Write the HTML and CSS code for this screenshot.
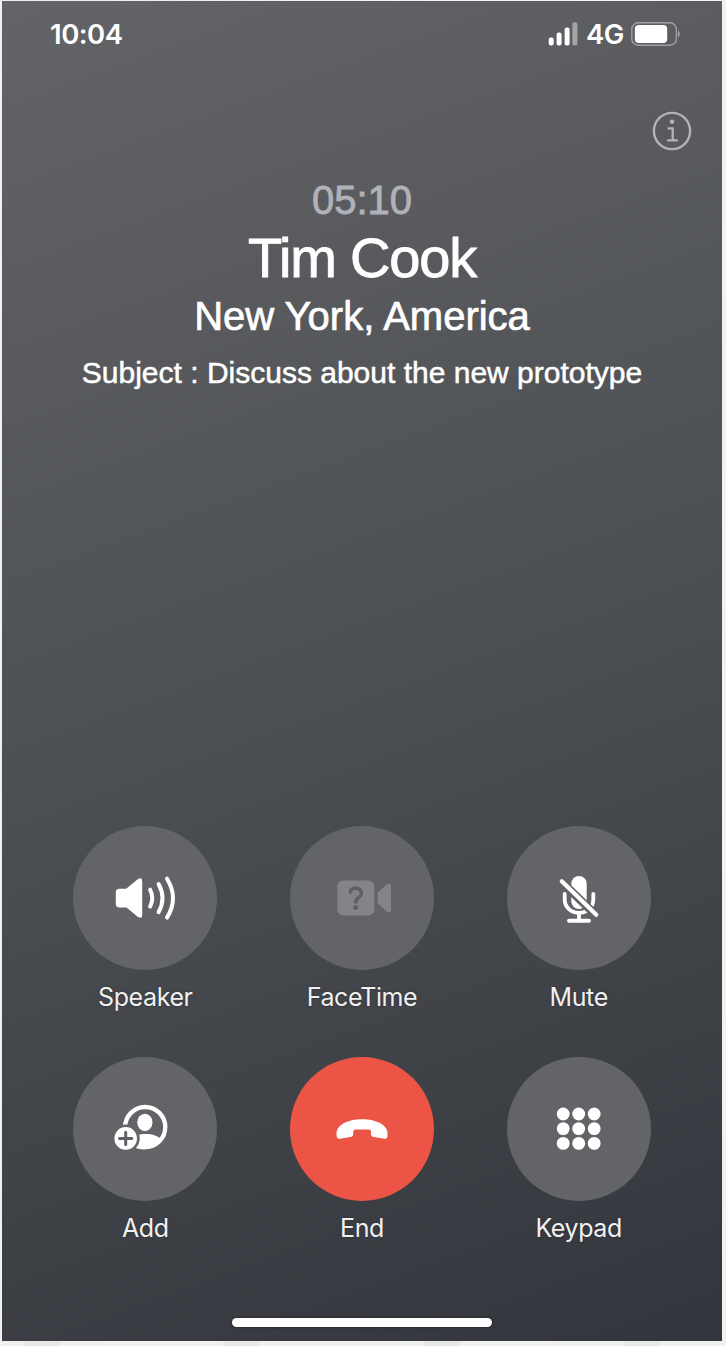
FILE: index.html
```html
<!DOCTYPE html>
<html lang="en">
<head>
<meta charset="utf-8">
<title>Call</title>
<link rel="stylesheet" href="styles.css">
</head>
<body>
<main class="phone">
  <header class="status">
    <span class="clock">10:04</span>
    <div class="indicators">
      <svg class="signal" width="30" height="24" viewBox="0 0 30 24" fill="#fff">
        <rect x="0.7" y="15.5" width="5" height="8" rx="2"/>
        <rect x="8.6" y="10.5" width="5" height="13" rx="2"/>
        <rect x="16.6" y="5.5" width="5" height="18" rx="2"/>
        <rect x="24.4" y="0.3" width="5" height="23.2" rx="2" fill="#a3a4a6"/>
      </svg>
      <span class="network">4G</span>
      <svg class="battery" width="49" height="24" viewBox="0 0 49 24">
        <rect x="0.8" y="0.8" width="44.6" height="22.4" rx="6.5" fill="none" stroke="#a0a1a4" stroke-width="1.4"/>
        <rect x="3.8" y="3" width="32.4" height="18" rx="4" fill="#fff"/>
        <path d="M47 8.5c2.3 1.4 2.3 5.6 0 7z" fill="#a0a1a4"/>
      </svg>
    </div>
  </header>
  <div class="toolbar">
    <svg width="40" height="40" viewBox="0 0 40 40" fill="none" stroke="#b2b2b9">
      <circle cx="20" cy="20" r="18.1" stroke-width="2.4"/>
      <circle cx="20" cy="10.8" r="2.3" fill="#b2b2b9" stroke="none"/>
      <path d="M16.5 17.3H20.7V29.3M16 29.4H25" stroke-width="2.3" stroke-linecap="round"/>
    </svg>
  </div>
  <section class="caller">
    <div class="timer">05:10</div>
    <h1 class="name">Tim Cook</h1>
    <div class="place">New York, America</div>
    <div class="subject">Subject : Discuss about the new prototype</div>
  </section>
  <section class="controls">
    <div class="control">
      <div class="button">
        <svg width="144" height="144" viewBox="0 0 144 144" fill="#fff">
          <path d="M46.5 62.8H53.2L64.7 53.3Q69.2 50.8 69.2 55V89.2Q69.2 93.2 65 91L53.5 81.5H46.5Q42.8 81.5 42.8 77.8V66.5Q42.8 62.8 46.5 62.8Z"/>
          <g fill="none" stroke="#fff" stroke-width="4" stroke-linecap="round">
            <path d="M77.1 63.7Q81.5 72.2 77.1 80.6M85.6 58Q93.4 72.2 85.6 86.2M94 52.7Q106 72.2 94 91.6"/>
          </g>
        </svg>
      </div>
      <div class="label">Speaker</div>
    </div>
    <div class="control">
      <div class="button">
        <svg width="144" height="144" viewBox="0 0 144 144" fill="#838487">
          <rect x="47.3" y="54.5" width="37" height="35" rx="6"/>
          <path d="M87.7 66.5L96.6 58.6Q101 56.4 101 60V84Q101 87.6 96.6 85.6L87.7 77.6Z"/>
          <path d="M60.3 66.2C60.3 60.6 71.4 60.6 71.4 67.4C71.4 71.8 65.8 71.4 65.8 76" fill="none" stroke="#5f6064" stroke-width="3.5" stroke-linecap="round"/>
          <circle cx="65.6" cy="81.4" r="2.5" fill="#5f6064"/>
        </svg>
      </div>
      <div class="label">FaceTime</div>
    </div>
    <div class="control">
      <div class="button">
        <svg width="144" height="144" viewBox="0 0 144 144">
          <rect x="64.3" y="50" width="15.4" height="33" rx="7.7" fill="#fff"/>
          <g fill="none" stroke="#fff" stroke-width="3.8" stroke-linecap="round">
            <path d="M57.7 68V73C57.7 91.5 86.3 91.5 86.3 73V68M72 88V94"/>
            <path d="M62.1 94.8H81.9" stroke-width="4.1"/>
          </g>
          <path d="M54.5 55.7L88 88.3" stroke="#626468" stroke-width="8.5"/>
          <path d="M54.8 55.2L89.3 88.8" stroke="#fff" stroke-width="4.2" stroke-linecap="round"/>
        </svg>
      </div>
      <div class="label">Mute</div>
    </div>
    <div class="control">
      <div class="button">
        <svg width="144" height="144" viewBox="0 0 144 144">
          <circle cx="72.2" cy="70.1" r="20.1" fill="none" stroke="#fff" stroke-width="4.3"/>
          <ellipse cx="71.9" cy="65.3" rx="7.6" ry="8.6" fill="#fff"/>
          <path d="M55 84C60 75.5 83 74.5 88 83C80 94.5 65 94.5 58 88Z" fill="#fff"/>
          <circle cx="52.7" cy="81.4" r="14" fill="#626468"/>
          <circle cx="52.7" cy="81.4" r="11.3" fill="#fff"/>
          <path d="M52.7 75.3V87.5M46.6 81.4H58.8" stroke="#606165" stroke-width="3" stroke-linecap="round"/>
        </svg>
      </div>
      <div class="label">Add</div>
    </div>
    <div class="control">
      <div class="button end">
        <svg width="144" height="144" viewBox="0 0 144 144" fill="#fff">
          <path d="M46.8 79.8C41.5 56.5 102.5 56.5 97.4 79.8Q97 82.3 94.3 81.8L84 80.1Q81 79.6 81 76.9V74.5Q81 72.8 78.5 72.6Q72 72.3 65.7 72.6Q63.2 72.8 63.2 74.5V76.9Q63.2 79.6 60.2 80.1L50 81.8Q47.2 82.3 46.8 79.8Z"/>
        </svg>
      </div>
      <div class="label">End</div>
    </div>
    <div class="control">
      <div class="button">
        <svg width="144" height="144" viewBox="0 0 144 144" fill="#fff">
          <circle cx="56.2" cy="57" r="6.4"/><circle cx="71.7" cy="57" r="6.4"/><circle cx="87.2" cy="57" r="6.4"/>
          <circle cx="56.2" cy="71.6" r="6.4"/><circle cx="71.7" cy="71.6" r="6.4"/><circle cx="87.2" cy="71.6" r="6.4"/>
          <circle cx="56.2" cy="86.4" r="6.4"/><circle cx="71.7" cy="86.4" r="6.4"/><circle cx="87.2" cy="86.4" r="6.4"/>
        </svg>
      </div>
      <div class="label">Keypad</div>
    </div>
  </section>
  <div class="home-bar"></div>
</main>
</body>
</html>
```
FILE: styles.css
```css
* { box-sizing: border-box; }
html { background: #f1f1f1; }
body {
  margin: 0;
  padding: 1px 4px 5px 2px;
  background: repeating-linear-gradient(90deg, #f1f1f1 0 22px, #e8e8e8 24px 58px, #f1f1f1 62px 200px) 0 100% / 722px 5px no-repeat;
}
svg { display: block; }
.phone {
  width: 720px;
  height: 1340px;
  display: flex;
  flex-direction: column;
  background: linear-gradient(160deg, #636467 0%, #4c4f53 50%, #33353c 100%);
  color: #fff;
  font-family: "Liberation Sans", Arial, sans-serif;
}
.status {
  height: 66px;
  padding: 0 42px 0 48px;
  display: flex;
  align-items: center;
  justify-content: space-between;
  font: 600 27.5px/34px Inter, sans-serif;
}
.clock { letter-spacing: -0.5px; }
.indicators { display: flex; align-items: center; }
.network { margin: 0 7px 0 8px; letter-spacing: -0.4px; }
.toolbar {
  height: 84px;
  padding: 44px 30px 0;
  display: flex;
  justify-content: flex-end;
}
.caller {
  height: 675px;
  padding-top: 26px;
  text-align: center;
  white-space: nowrap;
}
.timer { font-size: 40px; line-height: 46px; color: #b1b1b8; -webkit-text-stroke: 0.8px #b1b1b8; }
.name { margin: 0; padding-top: 1px; font-size: 56px; line-height: 68px; font-weight: 400; letter-spacing: -1.2px; -webkit-text-stroke: 0.9px #fff; }
.place { font-size: 40px; line-height: 48px; padding-bottom: 2px; -webkit-text-stroke: 0.7px #fff; }
.subject { font-size: 30px; line-height: 34px; padding-top: 14px; -webkit-text-stroke: 0.5px #fff; }
.controls {
  display: grid;
  grid-template-columns: repeat(3, 144px);
  column-gap: 72.7px;
  row-gap: 43px;
  justify-content: center;
}
.control { height: 188px; }
.button { width: 144px; height: 144px; border-radius: 50%; background: #626468; }
.end { background: #ec5545; }
.label {
  padding-top: 11px;
  font: 400 25px/32px Inter, sans-serif;
  letter-spacing: -0.4px;
  color: #f1f1f2;
  text-align: center;
  text-shadow: 0 0 2px #292b30;
}
.home-bar {
  width: 260px;
  height: 9px;
  margin: 73px auto 0;
  border-radius: 5px;
  background: #fff;
  box-shadow: 0 0 2px 1px #292b30;
}
```
